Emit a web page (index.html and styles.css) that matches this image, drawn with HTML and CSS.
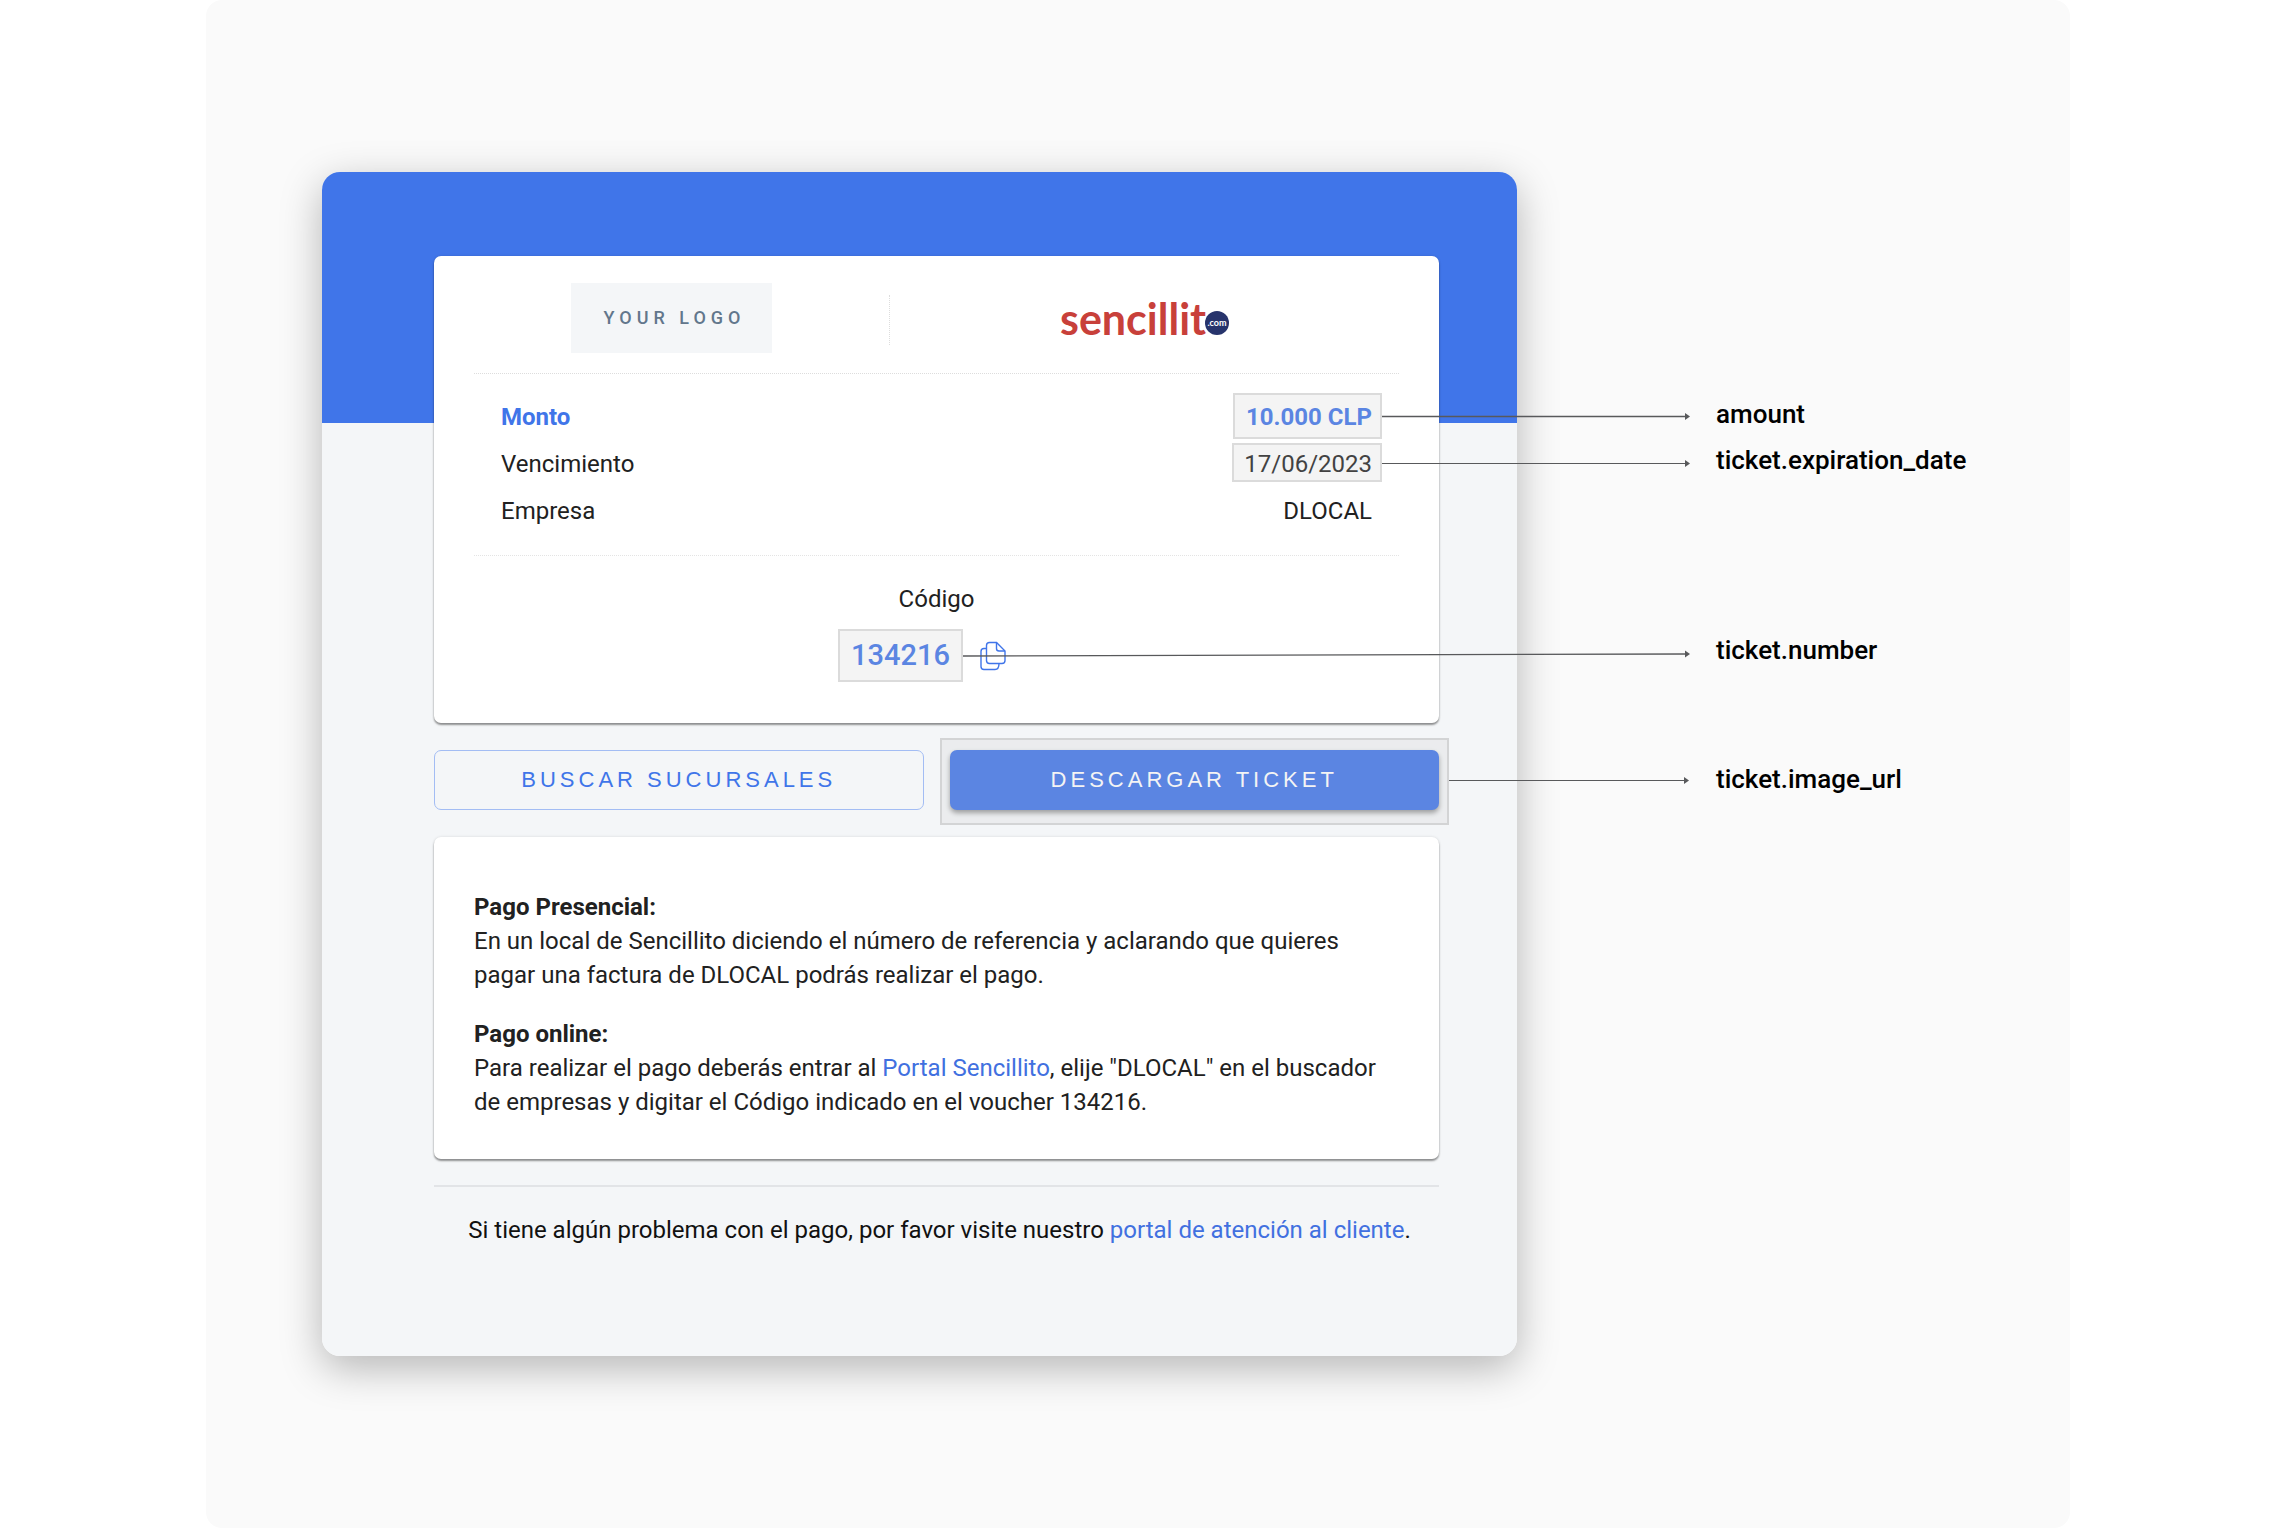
FILE: index.html
```html
<!DOCTYPE html>
<html lang="es">
<head>
    <meta charset="UTF-8">
    <meta name="viewport" content="width=device-width, initial-scale=1.0">
    <title>Ticket de pago</title>
    <link rel="stylesheet" href="styles.css">
</head>
<body>
    <div class="stage">
        <main class="voucher">
            <section class="card">
                <header class="logos">
                    <div class="logo-merchant"><span class="logo-box">YOUR LOGO</span></div>
                    <div class="logo-provider">
                        <svg width="172" height="60" viewBox="0 0 172 60" role="img" aria-label="sencillito.com">
                            <text class="logo-name" x="1" y="45">sencillit</text>
                            <circle cx="158" cy="33" r="12" fill="#27346c"/>
                            <text class="logo-com" x="158" y="36">.com</text>
                        </svg>
                    </div>
                </header>
                <dl class="details">
                    <div class="row row-amount">
                        <dt>Monto</dt>
                        <dd><span class="mark mark-amount">10.000 CLP<svg class="arrow" width="308" height="8"><path d="M0 4.5H304" stroke="#58595b" stroke-width="1.5"/><path d="M303 1L308 4.5L303 8Z" fill="#58595b"/></svg></span></dd>
                    </div>
                    <div class="row">
                        <dt>Vencimiento</dt>
                        <dd><span class="mark mark-date">17/06/2023<svg class="arrow" width="308" height="8"><path d="M0 4.5H304" stroke="#58595b" stroke-width="1"/><path d="M303 1L308 4.5L303 8Z" fill="#58595b"/></svg></span></dd>
                    </div>
                    <div class="row">
                        <dt>Empresa</dt>
                        <dd>DLOCAL</dd>
                    </div>
                </dl>
                <div class="code">
                    <p class="code-label">Código</p>
                    <div class="code-row">
                        <span class="mark mark-code">134216<svg class="arrow" width="727" height="8"><path d="M0 6L723 4" stroke="#58595b" stroke-width="1.3"/><path d="M722 0.5L727 4L722 7.5Z" fill="#58595b"/></svg></span>
                        <button type="button" class="copy" aria-label="Copiar código">
                            <svg width="26" height="30" viewBox="0 0 26 30" fill="none" stroke="#4075e9" stroke-width="1.4">
                                <path d="M9.500 1.500H16.500L25 10V19.500Q25 22.500 22 22.500H9.500Q6.500 22.500 6.500 19.500V4.500Q6.500 1.500 9.500 1.500Z"/>
                                <path d="M16.500 1.500V7.500Q16.500 10 19 10H25"/>
                                <path d="M6.500 7.500H4Q1 7.500 1 10.500V25.500Q1 28.500 4 28.500H15Q19 28.500 19 22.500"/>
                            </svg>
                        </button>
                    </div>
                </div>
            </section>

            <div class="actions">
                <button type="button" class="btn btn-outline">BUSCAR SUCURSALES</button>
                <div class="mark mark-button">
                    <button type="button" class="btn btn-primary">DESCARGAR TICKET</button>
                    <svg class="arrow" width="240" height="8"><path d="M0 4.5H236" stroke="#58595b" stroke-width="1"/><path d="M235 1L240 4.500L235 8Z" fill="#58595b"/></svg>
                </div>
            </div>

            <section class="card info">
                <h2>Pago Presencial:</h2>
                <p>En un local de Sencillito diciendo el número de referencia y aclarando que quieres pagar una factura de DLOCAL podrás realizar el pago.</p>
                <h2>Pago online:</h2>
                <p>Para realizar el pago deberás entrar al <a href="#">Portal Sencillito</a>, elije "DLOCAL" en el buscador de empresas y digitar el Código indicado en el voucher 134216.</p>
            </section>

            <footer class="help">
                Si tiene algún problema con el pago, por favor visite nuestro <a href="#">portal de atención al cliente</a>.
            </footer>
        </main>

        <ul class="fields">
            <li>amount</li>
            <li>ticket.expiration_date</li>
            <li class="field-number">ticket.number</li>
            <li class="field-image">ticket.image_url</li>
        </ul>
    </div>
</body>
</html>
```
FILE: styles.css
```css
* {
    box-sizing: border-box;
}

body {
    margin: 0;
    padding: 0 206px;
    background-color: #fff;
    font-family: Roboto, Arial, sans-serif;
    font-size: 24px;
    line-height: 34px;
    color: #212121;
}

h2, p, dl, dd, ul {
    margin: 0;
    padding: 0;
}

a {
    color: #4170e0;
    text-decoration: none;
}

button {
    cursor: pointer;
}

.stage {
    display: flex;
    align-items: flex-start;
    min-height: 100vh;
    padding: 172px 0 172px 116px;
    background-color: #fafafa;
    border-radius: 16px;
}

.voucher {
    flex: 0 1 1195px;
    padding: 84px 78px 109px 112px;
    background: linear-gradient(#4075e9 251px, #f4f6f8 251px);
    border-radius: 18px;
    box-shadow: 0 12px 42px rgba(0, 0, 0, 0.28);
}

.card {
    padding: 0 40px;
    background-color: #fff;
    border-radius: 7px;
    box-shadow: 0 2px 2px rgba(0, 0, 0, 0.4), 0 0 3px rgba(0, 0, 0, 0.12);
}

/* logos */
.logos {
    display: grid;
    grid-template-columns: minmax(0, 415px) 1fr;
    align-items: center;
    height: 118px;
    padding-top: 10px;
    border-bottom: 1px dotted #ddd;
}

.logo-merchant {
    display: flex;
    justify-content: center;
    padding: 0 20px 3px 0;
}

.logo-box {
    padding: 18px 27px 18px 33px;
    background-color: #f4f6f8;
    color: #62778c;
    font-size: 18px;
    font-weight: 500;
    letter-spacing: 5px;
}

.logo-provider {
    display: flex;
    align-items: center;
    justify-content: center;
    height: 50px;
    border-left: 1px dotted #ddd;
}

.logo-name {
    font-family: Lato, sans-serif;
    font-size: 43px;
    font-weight: 700;
    fill: #c8403a;
}

.logo-com {
    font-family: Lato, sans-serif;
    font-size: 9px;
    font-weight: 700;
    text-anchor: middle;
    fill: #fff;
}

/* payment details */
.details {
    padding: 20px 27px;
    border-bottom: 1px dotted #e4e4e4;
}

.row {
    display: flex;
    justify-content: space-between;
    line-height: 47px;
}

.row-amount {
    color: #4075e9;
    font-weight: 700;
}

/* highlighted values with an arrow to the field name */
.mark {
    position: relative;
    display: inline-block;
}

.mark::after {
    content: "";
    position: absolute;
    background-color: rgba(200, 200, 200, 0.2);
    border: 2px solid rgba(0, 0, 0, 0.1);
    pointer-events: none;
}

.mark-amount::after {
    inset: -1px -10px 2px -13px;
}

.mark-date::after {
    inset: 2px -10px 6px -12px;
}

.mark-code::after {
    inset: 0 -13px 0 -13px;
}

.mark-button::after {
    inset: -12px -10px -15px -10px;
}

.arrow {
    position: absolute;
    left: calc(100% + 10px);
    top: calc(50% - 6px);
    z-index: 1;
}

.mark-code .arrow {
    left: calc(100% + 13px);
}

.mark-button .arrow {
    top: calc(50% - 4px);
}

/* code */
.code {
    padding: 26px 0 41px;
    text-align: center;
}

.code-row {
    display: flex;
    justify-content: center;
    gap: 14px;
    margin-top: 13px;
}

.mark-code {
    color: #4075e9;
    font-size: 29px;
    font-weight: 500;
    line-height: 53px;
}

.copy {
    display: flex;
    align-items: center;
    padding: 0 16px;
    background: none;
    border: none;
}

/* buttons */
.actions {
    display: grid;
    grid-template-columns: 1fr 1fr;
    gap: 26px;
    margin: 27px 0;
}

.btn {
    width: 100%;
    height: 60px;
    border-radius: 7px;
    font-family: "Liberation Sans", Arial, sans-serif;
    font-size: 22px;
    letter-spacing: 4px;
}

.btn-outline {
    background: none;
    border: 1px solid #a3bdf4;
    color: #4075e9;
}

.btn-primary {
    display: block;
    background-color: #4075e9;
    border: none;
    box-shadow: 0 3px 5px rgba(0, 0, 0, 0.4);
    color: #fff;
}

/* instructions */
.info {
    padding-top: 53px;
    padding-bottom: 40px;
}

.info h2 {
    font-size: 24px;
    font-weight: 700;
}

.info p + h2 {
    margin-top: 25px;
}

.help {
    margin-top: 26px;
    padding: 26px 0 0 6px;
    border-top: 2px solid #e2e4e7;
    color: #111;
    text-align: center;
}

/* field names */
.fields {
    margin-left: 199px;
    padding-top: 219px;
    color: #000;
    font-size: 26px;
    font-weight: 500;
    line-height: 46px;
    list-style: none;
}

.field-number {
    margin-top: 144px;
}

.field-image {
    margin-top: 83px;
}
```
